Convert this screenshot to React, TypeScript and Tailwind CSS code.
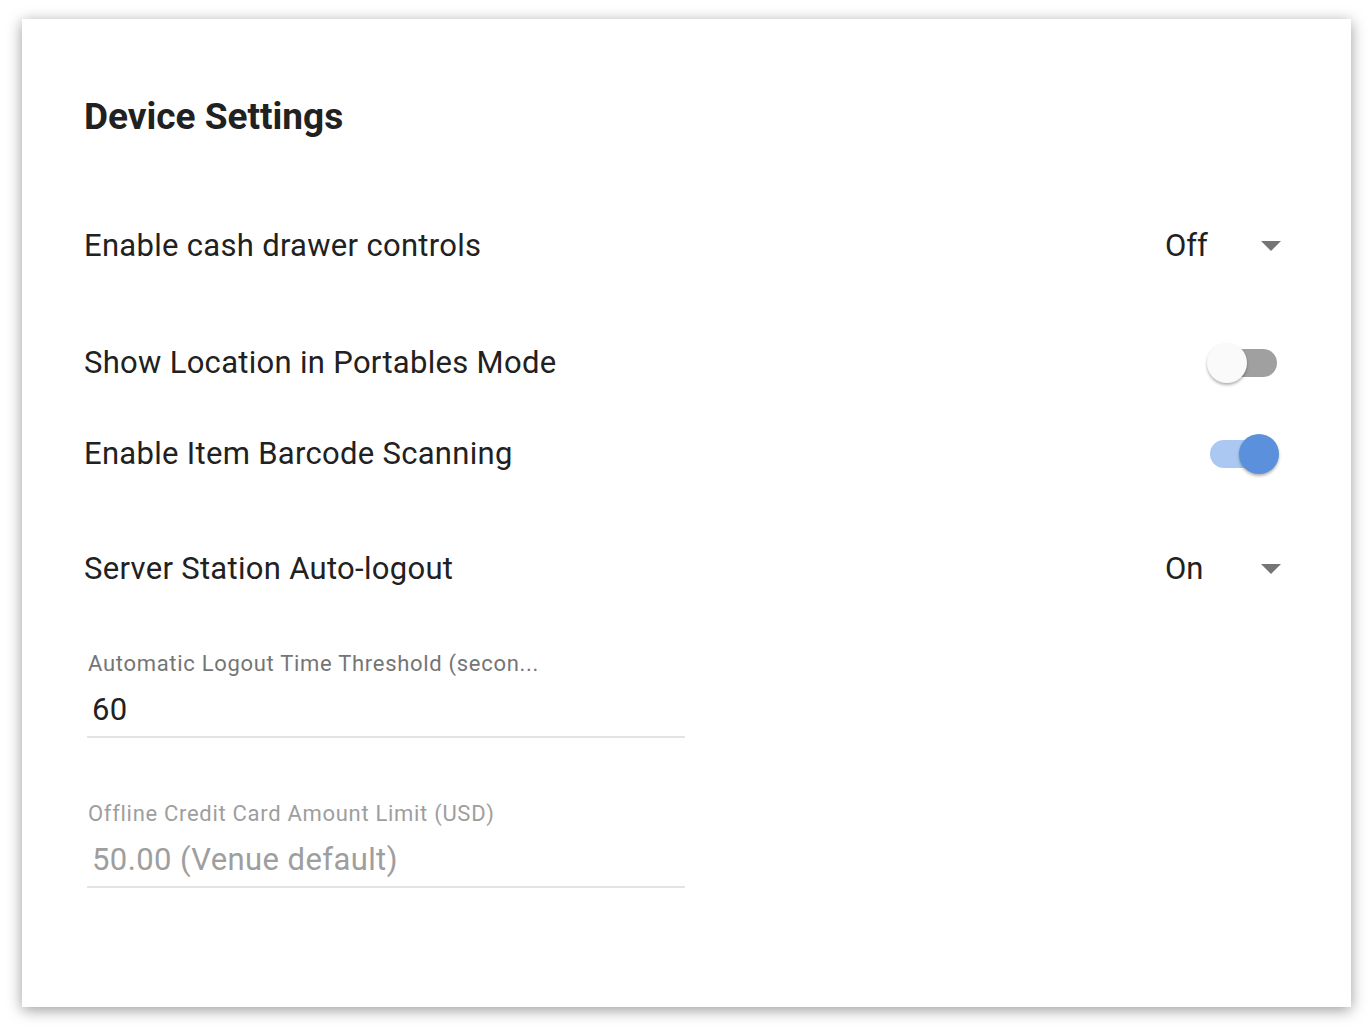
import React from "react"

type Choice = { label: string; value: string }

function Caret() {
  return (
    <svg width="20" height="10" viewBox="0 0 20 10" className="block">
      <path d="M0 0h20L10 10z" fill="#757575" />
    </svg>
  )
}

function SelectRow({ label, value }: Choice) {
  return (
    <div className="flex h-[60px] items-center justify-between">
      <span className="text-[31px] tracking-[0.3px] text-[#212121]">{label}</span>
      <div className="flex w-[116px] items-center justify-between">
        <span className="text-[31px] text-[#212121]">{value}</span>
        <Caret />
      </div>
    </div>
  )
}

function Toggle({ on }: { on: boolean }) {
  return (
    <div className="relative mr-[2px] h-[40px] w-[72px]">
      <div
        className={
          on
            ? "absolute left-[3px] top-[6px] h-[28px] w-[67px] rounded-full bg-[#aac8f1]"
            : "absolute left-[3px] top-[6px] h-[28px] w-[67px] rounded-full bg-[#a0a0a0]"
        }
      />
      <div
        className={
          on
            ? "absolute left-[32px] top-0 h-[40px] w-[40px] rounded-full bg-[#5a90dc] shadow-[0_2px_3px_rgba(0,0,0,0.3)]"
            : "absolute left-0 top-0 h-[40px] w-[40px] rounded-full bg-[#fafafa] shadow-[0_2px_3px_rgba(0,0,0,0.3)]"
        }
      />
    </div>
  )
}

function SwitchRow({ label, on }: { label: string; on: boolean }) {
  return (
    <div className="flex h-[60px] items-center justify-between">
      <span className="text-[31px] tracking-[0.3px] text-[#212121]">{label}</span>
      <Toggle on={on} />
    </div>
  )
}

function TextField({ label, value, disabled }: { label: string; value: string; disabled?: boolean }) {
  return (
    <div className="ml-[3px] w-[598px] border-b-2 border-[#e3e3e3] pb-[8px]">
      <p
        className={
          disabled
            ? "pl-[1px] text-[22px] leading-[26px] tracking-[0.7px] text-[#9e9e9e]"
            : "pl-[1px] text-[22px] leading-[26px] tracking-[0.7px] text-[#757575]"
        }
      >
        {label}
      </p>
      <p
        className={
          disabled
            ? "mt-[15px] pl-[5px] text-[31px] leading-[36px] tracking-[0.4px] text-[#9e9e9e]"
            : "mt-[15px] pl-[5px] text-[31px] leading-[36px] tracking-[0.4px] text-[#212121]"
        }
      >
        {value}
      </p>
    </div>
  )
}

export default function App() {
  return (
    <div className="min-h-screen bg-white pb-[27px] pl-[22px] pr-[21px] pt-[19px] font-['Roboto',sans-serif]">
      <div className="h-[988px] bg-white pl-[62px] pr-[70px] pt-[78px] shadow-[0_3px_14px_rgba(0,0,0,0.4)]">
        <h1 className="text-[37px] font-bold leading-[40px] text-[#212121]">Device Settings</h1>

        <div className="mt-[79px]">
          <SelectRow label="Enable cash drawer controls" value="Off" />
        </div>
        <div className="mt-[57px]">
          <SwitchRow label="Show Location in Portables Mode" on={false} />
        </div>
        <div className="mt-[31px]">
          <SwitchRow label="Enable Item Barcode Scanning" on={true} />
        </div>
        <div className="mt-[55px]">
          <SelectRow label="Server Station Auto-logout" value="On" />
        </div>

        <div className="mt-[52px]">
          <TextField label="Automatic Logout Time Threshold (secon..." value="60" />
        </div>
        <div className="mt-[63px]">
          <TextField label="Offline Credit Card Amount Limit (USD)" value="50.00 (Venue default)" disabled />
        </div>
      </div>
    </div>
  )
}
